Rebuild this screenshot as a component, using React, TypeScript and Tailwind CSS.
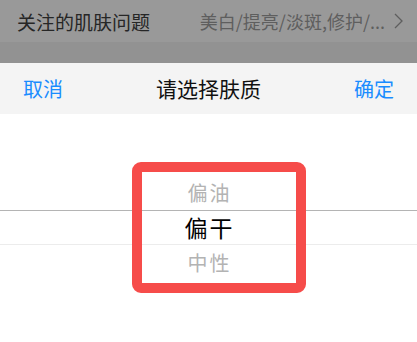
export default function App() {
  const font = { fontFamily: '"Noto Sans CJK SC", "Noto Sans", sans-serif' }

  return (
    <div className="w-[417px] h-[342px] overflow-hidden bg-white flex flex-col" style={font}>
      {/* Dimmed page behind the sheet */}
      <div className="h-[42px] bg-[#999999] flex items-center pl-[17px] pr-[14px]">
        <span className="text-[19px] leading-none text-[#262626]">关注的肌肤问题</span>
        <span className="ml-auto text-[18px] leading-none text-[#5e5e5e] whitespace-nowrap">美白/提亮/淡斑,修护/...</span>
        <svg className="ml-[9px] w-[9px] h-[16px] shrink-0" viewBox="0 0 9 16" fill="none">
          <path d="M1 1l7 7-7 7" stroke="#5e5e5e" strokeWidth="1.3" />
        </svg>
      </div>
      <div className="h-[21px] bg-[#929292]" />

      {/* Sheet header */}
      <div className="h-[51px] bg-[#f4f4f4] flex items-center justify-between px-[23px]">
        <button className="text-[20px] leading-none text-[#1a8cff]">取消</button>
        <span className="text-[21px] leading-none text-[#111]">请选择肤质</span>
        <button className="text-[20px] leading-none text-[#1a8cff]">确定</button>
      </div>

      {/* Picker */}
      <div className="relative flex-1 flex flex-col pt-[61px]">
        <div className="h-[35px] flex items-center justify-center text-[20px] tracking-[2px] pl-[2px] text-[#b3b3b3]">偏油</div>
        <div className="h-[35px] flex items-center justify-center text-[23px] tracking-[2px] pl-[2px] text-black border-t border-b border-t-[#b4b4b4] border-b-[#ececec]">
          偏干
        </div>
        <div className="h-[35px] flex items-center justify-center text-[20px] tracking-[2px] pl-[2px] text-[#b3b3b3]">中性</div>

        {/* Annotation box */}
        <div className="absolute left-[132px] top-[48px] w-[174px] h-[131px] border-[10px] border-[#f64c4a] rounded-[9px]" />
      </div>
    </div>
  )
}
